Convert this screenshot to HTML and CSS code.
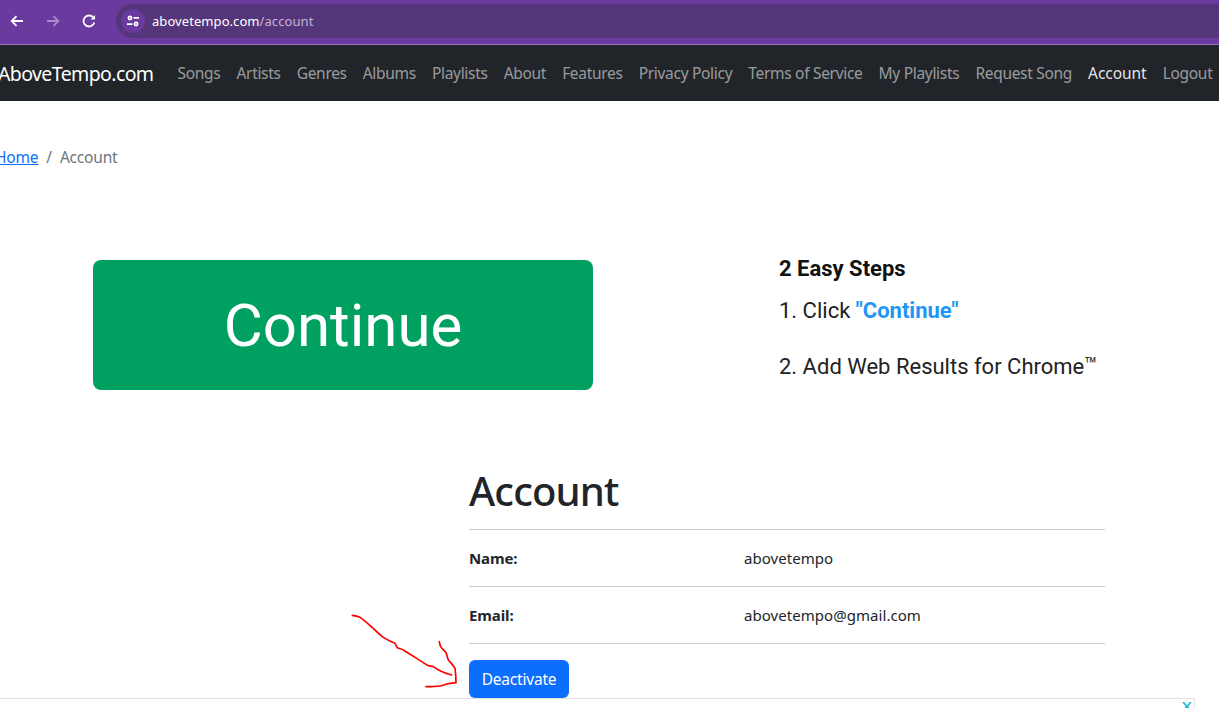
FILE: index.html
```html
<!DOCTYPE html>
<html lang="en">
<head>
<meta charset="utf-8">
<title>Account - AboveTempo.com</title>
<link rel="stylesheet" href="styles.css">
</head>
<body>
<header class="chrome">
  <svg class="cicon" width="16" height="16" viewBox="0 0 16 16"><path d="M14 8H3M7.500 3.200 2.700 8l4.800 4.800" fill="none" stroke="#fff" stroke-width="1.800"/></svg>
  <svg class="cicon" width="16" height="16" viewBox="0 0 16 16"><path d="M2 8h11M8.500 3.200 13.300 8l-4.800 4.800" fill="none" stroke="#a98bcb" stroke-width="1.800"/></svg>
  <svg class="cicon" width="16" height="16" viewBox="0 0 16 16"><path d="M13.300 9.500A5.500 5.500 0 1 1 12 4.200" fill="none" stroke="#fff" stroke-width="1.800"/><path d="M9.500 6.500H14V2z" fill="#fff"/></svg>
  <div class="omnibox">
    <span class="tune">
      <svg width="14" height="14" viewBox="0 0 16 16"><g fill="none" stroke="#fff" stroke-width="2"><circle cx="4.500" cy="4.500" r="1.800"/><circle cx="11.500" cy="11.500" r="1.800"/><path d="M8.500 4.500H15M1 11.500h6.500"/></g></svg>
    </span>
    <span class="url">abovetempo.com<span class="url-path">/account</span></span>
  </div>
</header>
<nav class="navbar">
  <a class="brand" href="#">AboveTempo.com</a>
  <ul class="navlinks">
    <li><a href="#">Songs</a></li>
    <li><a href="#">Artists</a></li>
    <li><a href="#">Genres</a></li>
    <li><a href="#">Albums</a></li>
    <li><a href="#">Playlists</a></li>
    <li><a href="#">About</a></li>
    <li><a href="#">Features</a></li>
    <li><a href="#">Privacy Policy</a></li>
    <li><a href="#">Terms of Service</a></li>
    <li><a href="#">My Playlists</a></li>
    <li><a href="#">Request Song</a></li>
    <li><a class="active" href="#">Account</a></li>
    <li><a href="#">Logout</a></li>
  </ul>
</nav>
<div class="breadcrumb"><a href="#">Home</a><span class="sep">/</span><span class="crumb">Account</span></div>
<section class="promo">
  <a class="continue" href="#">Continue</a>
  <div class="steps">
    <h3>2 Easy Steps</h3>
    <p class="step-one">1. Click <b>"Continue"</b></p>
    <p>2. Add Web Results for Chrome<sup>™</sup></p>
  </div>
</section>
<main class="account">
  <h1>Account</h1>
  <div class="row"><strong>Name:</strong><span>abovetempo</span></div>
  <div class="row"><strong>Email:</strong><span>abovetempo@gmail.com</span></div>
  <button class="deactivate" type="button">Deactivate</button>
</main>
<svg class="arrow" width="250" height="108" viewBox="0 0 750 324"><path d="M37 46C47 47 54 49 60 52C75 62 88 75 100 85C110 95 120 105 130 112C142 120 155 125 165 130L172 143C178 146 184 147 190 150C215 165 240 182 265 197L280 200C287 205 293 209 300 212C312 218 323 222 335 225M298 125C299 132 300 136 302 140C307 148 314 152 318 158C321 165 322 173 325 180C332 188 340 196 345 205C347 220 348 234 348 248C338 249 329 250 320 252C313 255 307 257 300 258C286 260 272 260 258 260" fill="none" stroke="#f00" stroke-width="5" stroke-linejoin="round" stroke-linecap="round"/></svg>
<div class="adbar"><svg class="adx" width="10" height="10" viewBox="0 0 10 10"><path d="M1 0 9 9M9 0 1 9" stroke="#1fbad6" stroke-width="1.800"/></svg></div>
</body>
</html>
```
FILE: styles.css
```css
* { box-sizing: border-box; }
html, body { height: 100%; }
body {
  margin: 0;
  height: 708px;
  overflow: hidden;
  background: #fff;
  color: #212529;
  font-family: "Noto Sans", "Open Sans", sans-serif;
}
.chrome {
  height: 45px;
  background: #6a3a9e;
  border-bottom: 1px solid #9673bc;
  display: flex;
  align-items: center;
  padding: 0 0 3px 9px;
}
.cicon { margin-right: 20px; flex: none; }
.omnibox {
  flex: 1;
  height: 34px;
  margin: 0 0 0 -1px;
  background: #56367a;
  border-radius: 17px 0 0 17px;
  display: flex;
  align-items: center;
  padding-left: 5px;
  font-family: "Noto Sans", sans-serif;
  font-size: 13px;
  letter-spacing: .07px;
  color: #fff;
}
.tune {
  width: 24px;
  height: 24px;
  border-radius: 50%;
  background: #6a3a9e;
  display: flex;
  align-items: center;
  justify-content: center;
  margin-right: 7px;
}
.url-path { color: #c4b3d6; }
.navbar {
  height: 56px;
  background: #212529;
  display: flex;
  align-items: center;
  margin: 0;
}
.brand {
  color: #fff;
  font-size: 19.500px;
  text-decoration: none;
  margin-left: -2px;
  margin-right: 16px;
  letter-spacing: -.6px;
}
.navlinks {
  display: flex;
  list-style: none;
  margin: 0;
  padding: 0;
}
.navlinks a {
  display: block;
  padding: 0 8px;
  font-size: 15.500px;
  letter-spacing: -.3px;
  color: rgba(255,255,255,.55);
  text-decoration: none;
  white-space: nowrap;
}
.navlinks a.active { color: rgba(255,255,255,.9); letter-spacing: -.05px; }
.breadcrumb {
  margin-top: 46px;
  font-size: 15.500px;
  line-height: 21px;
  margin-left: -5px;
  letter-spacing: -.2px;
  color: #6c757d;
  white-space: nowrap;
}
.breadcrumb a { color: #0d6efd; }
.sep { margin: 0 8px; }
.promo {
  display: flex;
  margin: 92px 0 0 93px;
  font-family: Roboto, sans-serif;
}
.continue {
  width: 500px;
  height: 130px;
  background: #00a060;
  border-radius: 8px;
  color: #fff;
  font-size: 60px;
  display: flex;
  align-items: center;
  justify-content: center;
  text-decoration: none;
}
.steps { margin-left: 186px; color: #222; font-size: 22px; }
.steps h3 { margin: -4px 0 0; font-size: 22px; line-height: 26px; font-weight: 700; color: #111; padding-top: 0; }
.steps p { margin: 0; line-height: 28px; }
.steps .step-one { margin: 15px 0 28px; }
.steps b { color: #2196f3; }
.steps sup { font-size: 21px; line-height: 0; vertical-align: 2px; }
.account {
  width: 636px;
  margin: 74px 0 0 469px;
}
.account h1 {
  margin: 0;
  font-size: 40px;
  line-height: 54px;
  font-weight: 500;
  letter-spacing: -.85px;
  padding-bottom: 11px;
  border-bottom: 1px solid #ccc;
}
.row {
  display: flex;
  height: 57px;
  align-items: center;
  border-bottom: 1px solid #ccc;
  font-size: 15px;
  letter-spacing: .05px;
}
.row strong { width: 275px; font-weight: 700; font-size: 15px; letter-spacing: -.1px; }
.deactivate {
  margin-top: 16px;
  display: block;
  height: 38px;
  width: 100px;
  background: #0d6efd;
  border: 0;
  border-radius: 6px;
  color: #fff;
  font: 15.500px "Noto Sans", sans-serif;
  letter-spacing: -.2px;
  padding: 0;
}
.arrow {
  position: absolute;
  left: 340px;
  top: 600px;
}
.adbar {
  position: fixed;
  left: 0;
  bottom: 0;
  width: 1195px;
  height: 10px;
  background: #fff;
  border-top: 1px solid #e2e2e2;
  border-right: 1px solid #e2e2e2;
}
.adx { position: absolute; left: 1182px; top: 3px; }
```
